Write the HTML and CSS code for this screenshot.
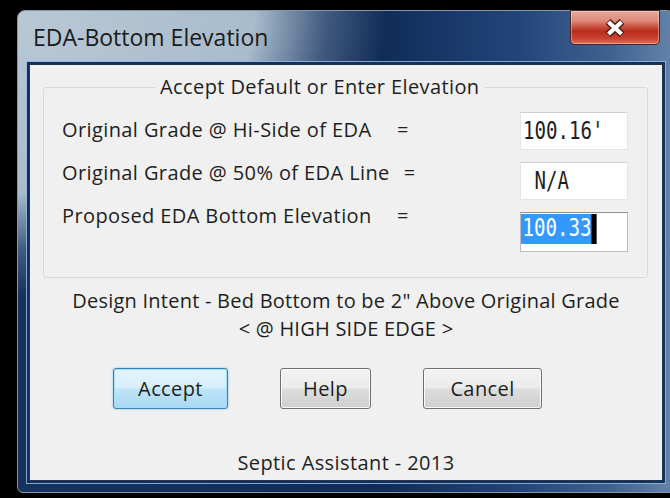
FILE: index.html
```html
<!DOCTYPE html>
<html lang="en">
<head>
<meta charset="utf-8">
<title>EDA-Bottom Elevation</title>
<link rel="stylesheet" href="styles.css">
</head>
<body>
<div class="desk">
  <div class="window">
    <div class="titlebar">
      <span class="title">EDA-Bottom Elevation</span>
      <button class="close" type="button" aria-label="Close">
        <svg width="24" height="20" viewBox="0 0 24 20">
          <path d="M5 3.5 L19 16.5 M19 3.5 L5 16.5" stroke="#4a1c14" stroke-width="7" fill="none"/>
          <path d="M5.5 4 L18.5 16 M18.5 4 L5.5 16" stroke="#ffffff" stroke-width="4.2" fill="none"/>
        </svg>
      </button>
    </div>
    <div class="client">
      <fieldset class="group">
        <legend>Accept Default or Enter Elevation</legend>
        <div class="fields">
          <div class="labels">
            <div class="lbl"><span class="name">Original Grade @ Hi-Side of EDA</span><span class="eq">=</span></div>
            <div class="lbl"><span class="name">Original Grade @ 50% of EDA Line</span><span class="eq">=</span></div>
            <div class="lbl"><span class="name">Proposed EDA Bottom Elevation</span><span class="eq">=</span></div>
          </div>
          <div class="inputs">
            <div class="box"><span class="val">100.16'</span></div>
            <div class="box"><span class="val"> N/A</span></div>
            <div class="box focus"><span class="val"><span class="sel">100.33</span><span class="caret"></span></span></div>
          </div>
        </div>
      </fieldset>
      <p class="intent">Design Intent - Bed Bottom to be 2" Above Original Grade<br>&lt; @ HIGH SIDE EDGE &gt;</p>
      <div class="buttons">
        <button class="btn default btn-accept" type="button">Accept</button>
        <button class="btn btn-help" type="button">Help</button>
        <button class="btn btn-cancel" type="button">Cancel</button>
      </div>
      <p class="footer">Septic Assistant - 2013</p>
    </div>
  </div>
</div>
</body>
</html>
```
FILE: styles.css
```css
* { box-sizing: border-box; }

html, body { margin: 0; padding: 0; }

body {
  width: 670px;
  height: 498px;
  overflow: hidden;
  background: #000;
  font-family: "Open Sans", "Noto Sans", sans-serif;
  color: #1e1e1e;
}

.desk { padding: 10px 0 0 17px; }

/* Aero-style glass frame */
.window {
  width: 658px;
  height: 483px;
  border: 1px solid #8797aa;
  border-radius: 8px 8px 6px 6px;
  padding: 0 12px 12px 12px;
  display: flex;
  flex-direction: column;
  background:
    radial-gradient(ellipse 430px 330px at 0 0, #b8c8d5 0%, #a9bccc 55%, rgba(150,172,195,0.35) 72%, rgba(150,172,195,0) 86%),
    linear-gradient(90deg, #16335f 0%, #102b57 55%, #23447a 76%, #3f6190 90%, #6584ab 100%);
}

.titlebar {
  height: 54px;
  display: flex;
  align-items: flex-start;
}

.title {
  margin: 10px 0 0 3px;
  font-size: 23px;
  line-height: 32px;
  color: #1b1b1b;
}

.close {
  margin: -1px 2px 0 auto;
  width: 90px;
  height: 35px;
  padding: 0;
  border: 1px solid #4c2420;
  border-radius: 0 0 5px 5px;
  display: flex;
  align-items: center;
  justify-content: center;
  background: linear-gradient(#e7a99d 0%, #dc8a7a 30%, #c9493a 50%, #b92d1d 62%, #c8412c 82%, #e0705a 100%);
  box-shadow: inset 0 0 0 1px rgba(255,255,255,0.35);
}

.client {
  flex: 1;
  background: #f0f0f0;
  display: flex;
  flex-direction: column;
  font-size: 20px;
  letter-spacing: 0.4px;
  box-shadow: 0 0 0 1px #26354d, 0 0 0 3px #12305e, 0 0 0 4px rgba(150,185,222,0.85);
}

/* group box */
.group {
  margin: 10px 0 0 13px;
  width: 605px;
  padding: 0 0 25px 18px;
  border: 1px solid #d3dbe2;
  border-radius: 3px;
  min-width: 0;
}

.group legend {
  margin-left: 93px;
  padding: 0 5px;
  line-height: 24px;
}

.fields {
  display: flex;
}

.labels {
  width: 458px;
  padding-top: 19px;
  display: flex;
  flex-direction: column;
  gap: 19px;
}

.lbl {
  display: flex;
  line-height: 24px;
  white-space: nowrap;
}

.lbl .name { min-width: 335px; padding-right: 14px; }

.inputs {
  padding-top: 13px;
  display: flex;
  flex-direction: column;
  gap: 12px;
}

.box {
  width: 108px;
  height: 38px;
  background: #fff;
  border: 1px solid #e2e4e6;
  border-top-color: #cfd2d5;
  display: flex;
  align-items: center;
  padding-left: 2px;
  white-space: pre;
  letter-spacing: 0;
}

.box .val {
  display: inline-flex;
  align-items: stretch;
  font-family: "DejaVu Sans Mono", "Liberation Mono", monospace;
  font-size: 25px;
  line-height: 28px;
  transform: scaleX(0.764);
  transform-origin: left center;
  color: #1e1e1e;
}

.box.focus {
  height: 40px;
  border-color: #b8bcc0;
  border-top-color: #8e9296;
  padding-left: 0;
  align-items: flex-start;
  padding-top: 1px;
}

.sel {
  background: #3399ff;
  color: #fff;
  padding-left: 2px;
}

/* text cursor, drawn in the scaled coordinate space */
.caret {
  width: 6.5px;
  height: 30px;
  background: #000;
}

.intent {
  margin: 9px 0 0;
  text-align: center;
  line-height: 28px;
  letter-spacing: 0.24px;
}

.buttons {
  margin-top: 25px;
  padding-left: 83px;
  display: flex;
  gap: 52px;
}

.btn {
  height: 41px;
  padding: 0;
  font-family: inherit;
  font-size: 20px;
  letter-spacing: 0.4px;
  color: #1e1e1e;
  border: 1px solid #707070;
  border-radius: 3px;
  background: linear-gradient(#f3f3f3 0%, #ebebeb 48%, #dddddd 52%, #cfcfcf 100%);
  box-shadow: inset 0 0 0 1px rgba(255,255,255,0.85);
}

.btn.default {
  border-color: #3c7fb1;
  background: linear-gradient(#e5f4fc 0%, #d6eefb 48%, #bfe4f8 52%, #a9d8f2 100%);
  box-shadow: inset 0 0 0 1px #9fe0fb, 0 0 2px rgba(60,140,200,0.6);
}

.btn-accept { width: 115px; }
.btn-help { width: 91px; }
.btn-cancel { width: 119px; }

.footer {
  margin: 42px 0 0;
  text-align: center;
  line-height: 24px;
}
```
